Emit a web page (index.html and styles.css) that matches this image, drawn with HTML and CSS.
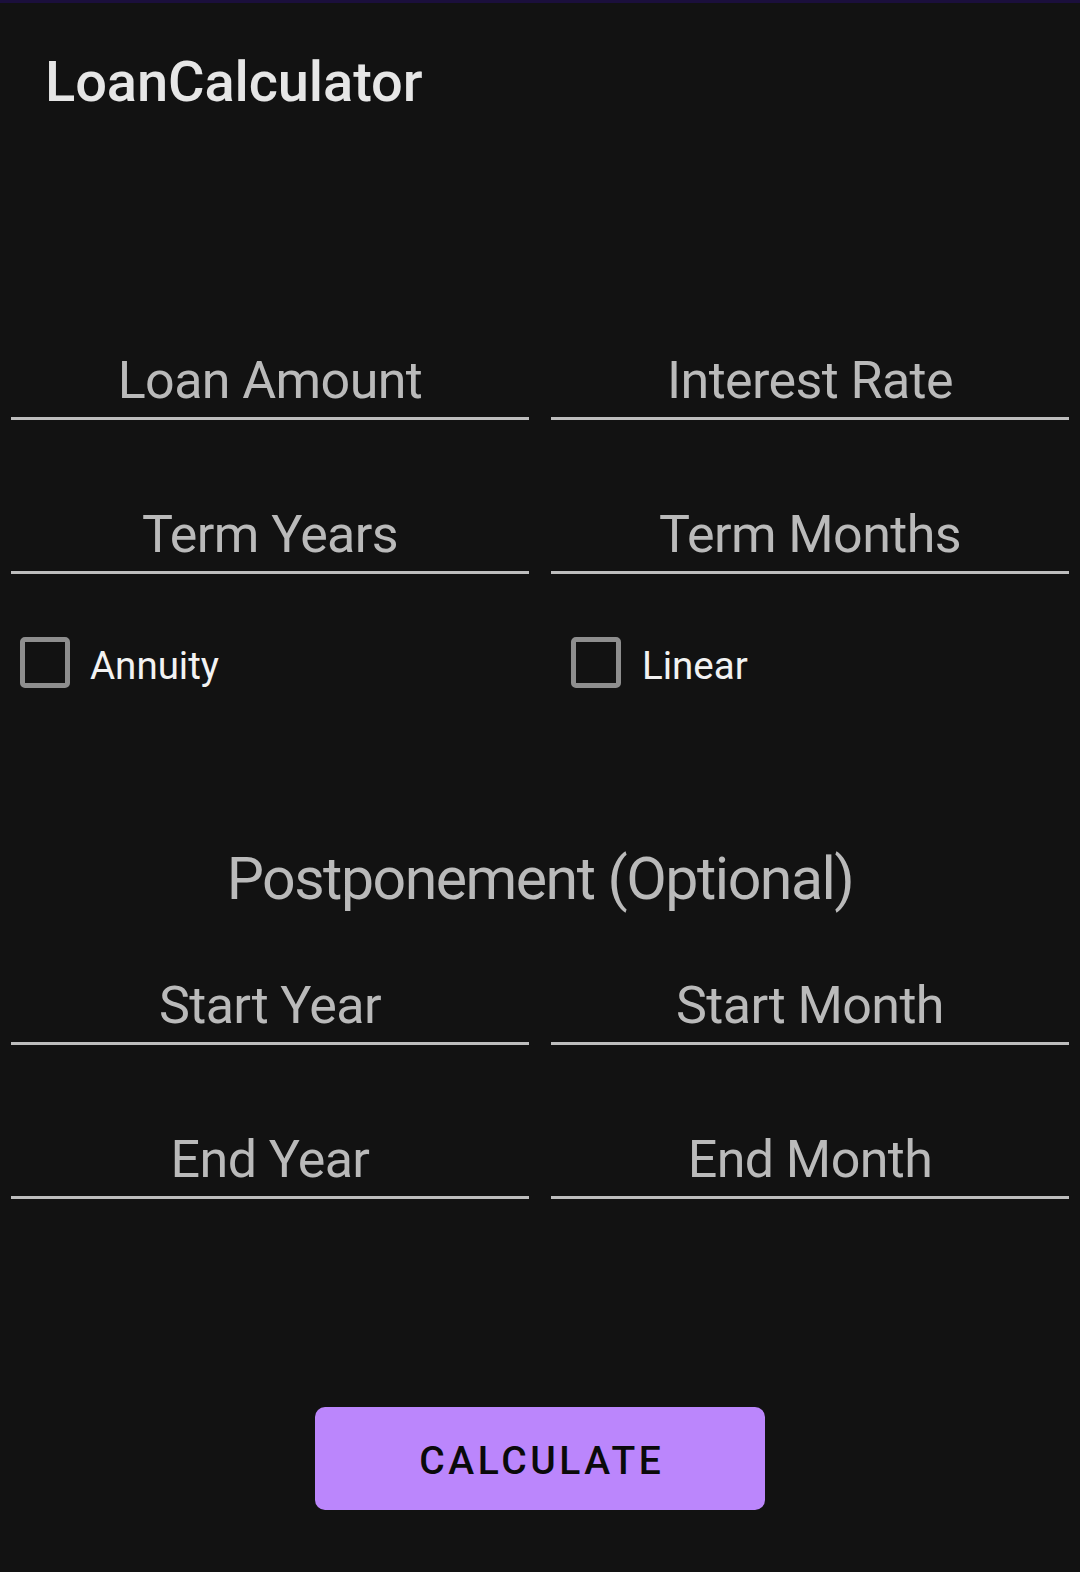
FILE: index.html
```html
<!DOCTYPE html>
<html lang="en">
<head>
<meta charset="utf-8">
<title>LoanCalculator</title>
<link rel="stylesheet" href="styles.css">
</head>
<body>
<div class="statusline"></div>
<header class="appbar">
  <h1 class="title">LoanCalculator</h1>
</header>
<main class="content">
  <section class="grid fields-top">
    <div class="field"><span class="hint">Loan Amount</span></div>
    <div class="field"><span class="hint">Interest Rate</span></div>
    <div class="field"><span class="hint">Term Years</span></div>
    <div class="field"><span class="hint">Term Months</span></div>
  </section>
  <section class="grid checks">
    <label class="check check-left"><span class="box"></span><span class="check-label">Annuity</span></label>
    <label class="check check-right"><span class="box"></span><span class="check-label">Linear</span></label>
  </section>
  <h2 class="section-title">Postponement (Optional)</h2>
  <section class="grid fields-bottom">
    <div class="field"><span class="hint">Start Year</span></div>
    <div class="field"><span class="hint">Start Month</span></div>
    <div class="field"><span class="hint">End Year</span></div>
    <div class="field"><span class="hint">End Month</span></div>
  </section>
  <div class="actions">
    <button class="btn" type="button">CALCULATE</button>
  </div>
</main>
</body>
</html>
```

FILE: styles.css
```css
html, body {
  margin: 0;
  padding: 0;
  background: #121212;
}
body {
  width: 1080px;
  height: 1572px;
  overflow: hidden;
  font-family: "Roboto", "Noto Sans", sans-serif;
}
.statusline {
  height: 3px;
  background: #1b0f3c;
}
.appbar {
  padding: 47px 0 0 45px;
}
.title {
  margin: 0;
  font-size: 56px;
  line-height: 64px;
  font-weight: 500;
  color: #e6e6e6;
  letter-spacing: -0.1px;
}
.content {
  padding: 0 11px;
}
.grid {
  display: grid;
  grid-template-columns: 1fr 1fr;
  column-gap: 22px;
}
.fields-top {
  margin-top: 237px;
  row-gap: 85px;
}
.fields-bottom {
  margin-top: 61px;
  row-gap: 85px;
}
.field {
  height: 60px;
  padding-bottom: 6px;
  border-bottom: 3px solid #bdbdbd;
  text-align: center;
}
.hint {
  font-size: 52px;
  line-height: 60px;
  letter-spacing: -0.6px;
  color: #bababa;
}
.checks {
  margin-top: 63px;
  height: 51px;
}
.check {
  display: flex;
  align-items: center;
}
.check-left { margin-left: 9px; }
.check-right { margin-left: 20px; }
.box {
  box-sizing: border-box;
  width: 50px;
  height: 51px;
  border: 5px solid #8e8e8e;
  border-radius: 5px;
  flex: none;
}
.check-label {
  margin-left: 20px;
  padding-top: 8px;
  font-size: 38.5px;
  line-height: 1;
  color: #f2f2f2;
}
.check-right .check-label { margin-left: 21px; }
.section-title {
  margin: 155px 0 0;
  font-size: 59px;
  line-height: 72px;
  font-weight: 400;
  letter-spacing: -1.5px;
  color: #bababa;
  text-align: center;
}
.actions {
  display: flex;
  justify-content: center;
  margin-top: 208px;
}
.btn {
  width: 450px;
  height: 103px;
  border: none;
  border-radius: 10px;
  background: #bb86fc;
  color: #0a0a0a;
  font-family: "Roboto", sans-serif;
  font-weight: 500;
  font-size: 39px;
  letter-spacing: 3.6px;
  padding: 4px 0 0 3.6px;
  display: flex;
  align-items: center;
  justify-content: center;
}
```
